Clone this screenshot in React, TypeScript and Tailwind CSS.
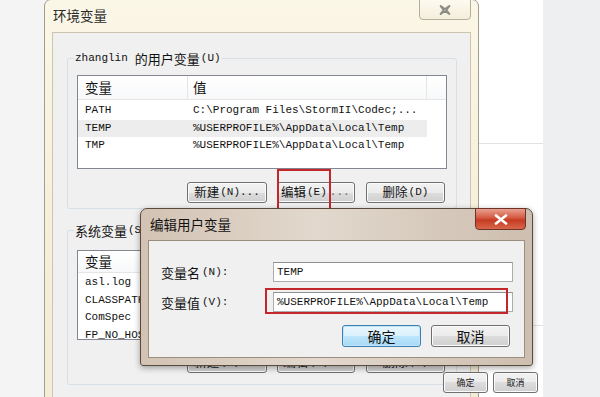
import React from "react";

const MONO = "font-['Liberation_Mono','Noto_Sans_CJK_SC',monospace] text-[11px] leading-none text-[#111]";

function C({ children, className = "" }: { children: React.ReactNode; className?: string }) {
  return <span className={`font-['Noto_Sans_CJK_SC',sans-serif] ${className}`}>{children}</span>;
}

function WinButton({ children, className = "" }: { children: React.ReactNode; className?: string }) {
  return (
    <div
      className={`flex items-center justify-center h-[21px] border border-[#707070] rounded-[3px] bg-[linear-gradient(to_bottom,#f2f2f2_0%,#ebebeb_50%,#dddddd_50%,#cfcfcf_100%)] shadow-[inset_0_0_0_1px_#fbfbfb] ${className}`}
    >
      {children}
    </div>
  );
}

function ListHeader({ h, showValue = true }: { h: string; showValue?: boolean }) {
  return (
    <div className={`flex ${h} border-b border-[#e5e5e5] bg-[linear-gradient(to_bottom,#ffffff,#f7f8f9)]`}>
      <div className="w-[110px] flex items-center pl-[7px] border-r border-[#e5e5e5]">
        <C className="text-[13.5px] leading-none text-[#111]">变量</C>
      </div>
      <div className="w-[239px] flex items-center pl-[5px] border-r border-[#e5e5e5]">
        {showValue && <C className="text-[13.5px] leading-none text-[#111]">值</C>}
      </div>
      <div className="flex-1" />
    </div>
  );
}

function Row({ name, value, selected = false }: { name: string; value?: string; selected?: boolean }) {
  return (
    <div className="flex h-[17.5px]">
      <div className={`flex w-[349px] items-center ${selected ? "bg-[#ededed]" : ""}`}>
        <div className={`w-[110px] pl-[7px] ${MONO}`}>{name}</div>
        {value && <div className={`pl-[5px] whitespace-nowrap ${MONO}`}>{value}</div>}
      </div>
    </div>
  );
}

export default function App() {
  return (
    <div className="relative w-[600px] h-[397px] overflow-hidden bg-[#f4f4f4]">
      {/* window behind on the right */}
      <div className="absolute left-[470px] top-0 w-[74px] h-[397px] bg-white">
        <div className="mt-[143px] h-px bg-[#e2e2e2]" />
        <div className="mt-[181px] ml-[43px] h-px bg-[#e2e2e2]" />
      </div>
      <div className="absolute left-[543px] top-0 w-[57px] h-[397px] bg-[#eeeff1]" />

      {/* main window: 环境变量 */}
      <div className="absolute left-[44px] -top-[1px] w-[435px] h-[420px] flex flex-col border border-[#a19d8f] rounded-t-[7px] bg-[linear-gradient(to_bottom,#fbf7e7,#f5eed8_60%,#f3ecd6)]">
        <div className="relative h-[32px] flex items-center pl-[8px]">
          <C className="text-[13.5px] leading-none text-[#2a2a2a]">环境变量</C>
          <div className="absolute left-[374px] -top-[1px] w-[52px] h-[21px] rounded-b-[4px] border border-[#b5ae9b] bg-[linear-gradient(to_bottom,#fdfaf0,#f4eedb)] flex items-center justify-center">
            <svg width="16" height="12" viewBox="0 0 16 12">
              <path
                d="M3 1.5 L8 5 L13 1.5 M3 10.5 L8 7 L13 10.5 M3 1.5 L6.5 6 L3 10.5 M13 1.5 L9.5 6 L13 10.5"
                fill="none"
                stroke="#8c8a84"
                strokeWidth="1.6"
                strokeLinejoin="round"
              />
            </svg>
          </div>
        </div>
        <div className="mx-[7px] flex-1 border border-[#cbc4ae] bg-[#f0f0f0] flex flex-col">
          {/* user variables */}
          <div className="relative ml-[14px] mt-[25px] w-[390px] h-[151px] border border-[#d5dfe5] rounded-[3px] pt-[16px] pl-[9px] flex flex-col">
            <div className="absolute left-[6px] -top-[9px] px-[1px] bg-[#f0f0f0] flex items-center h-[16px] whitespace-nowrap">
              <span className={MONO}>zhanglin</span>
              <C className="ml-[7px] text-[13px] leading-none text-[#111]">的用户变量</C>
              <span className={`${MONO} ml-[1px]`}>(U)</span>
            </div>
            <div className="w-[370px] h-[94px] border border-[#828790] bg-white overflow-hidden">
              <ListHeader h="h-[24px]" />
              <div className="pt-[2px]">
                <Row name="PATH" value="C:\Program Files\StormII\Codec;..." />
                <Row name="TEMP" value="%USERPROFILE%\AppData\Local\Temp" selected />
                <Row name="TMP" value="%USERPROFILE%\AppData\Local\Temp" />
              </div>
            </div>
            <div className="mt-[13px] flex pl-[110px]">
              <WinButton className="w-[80px]">
                <C className="text-[12.5px] leading-none text-[#111]">新建</C>
                <span className={`${MONO} ml-[1px]`}>(N)...</span>
              </WinButton>
              <WinButton className="w-[78px] ml-[10px] justify-start pl-[3px]">
                <C className="text-[12.5px] leading-none text-[#111]">编辑</C>
                <span className={`${MONO} ml-[1px]`}>(E)</span>
                <span className={`${MONO} ml-[3px] text-[#666]`}>...</span>
              </WinButton>
              <WinButton className="w-[79px] ml-[11px]">
                <C className="text-[12.5px] leading-none text-[#111]">删除</C>
                <span className={`${MONO} ml-[1px]`}>(D)</span>
              </WinButton>
            </div>
            <div className="absolute left-[209px] top-[110px] w-[54px] h-[41px] border-2 border-[#c4262c]" />
          </div>

          {/* system variables */}
          <div className="relative ml-[14px] mt-[21px] w-[390px] h-[155px] border border-[#d5dfe5] rounded-[3px] pt-[19px] pl-[9px] flex flex-col">
            <div className="absolute left-[6px] -top-[9px] px-[1px] bg-[#f0f0f0] flex items-center h-[16px] whitespace-nowrap">
              <C className="text-[13px] leading-none text-[#111]">系统变量</C>
              <span className={`${MONO} ml-[1px]`}>(S)</span>
            </div>
            <div className="w-[370px] h-[90px] border border-[#828790] bg-white overflow-hidden">
              <ListHeader h="h-[22px]" showValue={false} />
              <div className="pt-[1px]">
                <Row name="asl.log" />
                <Row name="CLASSPATH" />
                <Row name="ComSpec" />
                <Row name="FP_NO_HOST_CHECK" />
              </div>
            </div>
            <div className="mt-[12px] flex pl-[110px]">
              <WinButton className="w-[80px]">
                <C className="text-[12.5px] leading-none text-[#111]">新建</C>
                <span className={`${MONO} ml-[1px]`}>(W)...</span>
              </WinButton>
              <WinButton className="w-[78px] ml-[10px]">
                <C className="text-[12.5px] leading-none text-[#111]">编辑</C>
                <span className={`${MONO} ml-[1px]`}>(I)...</span>
              </WinButton>
              <WinButton className="w-[79px] ml-[11px]">
                <C className="text-[12.5px] leading-none text-[#111]">删除</C>
                <span className={`${MONO} ml-[1px]`}>(L)</span>
              </WinButton>
            </div>
          </div>
        </div>
      </div>

      {/* small buttons bottom right */}
      <div className="absolute left-[443px] top-[372px] flex gap-[5px]">
        <WinButton className="w-[45px] h-[15px] rounded-[2px]">
          <C className="text-[9px] leading-none text-[#222]">确定</C>
        </WinButton>
        <WinButton className="w-[45px] h-[15px] rounded-[2px]">
          <C className="text-[9px] leading-none text-[#222]">取消</C>
        </WinButton>
      </div>

      {/* dialog: 编辑用户变量 */}
      <div className="absolute left-[140px] top-[208px] w-[393px] h-[158px] flex flex-col border border-[#5a4a3b] rounded-t-[7px] rounded-b-[3px] bg-[linear-gradient(to_right,#d2c3b4,#e2d8cd_45%,#cdbeaf)] shadow-[0_2px_6px_rgba(0,0,0,0.35)]">
        <div className="relative h-[31px] flex items-center pl-[9px]">
          <C className="text-[13.5px] leading-none text-[#111]">编辑用户变量</C>
          <div className="absolute left-[334px] -top-[1px] w-[51px] h-[22px] rounded-b-[4px] border border-[#6e3226] bg-[linear-gradient(to_bottom,#e8a08f,#d4583f_45%,#c53b22_55%,#d8664a)] flex items-center justify-center">
            <svg width="14" height="11" viewBox="0 0 14 11">
              <path d="M2 1.5 L12 9.5 M12 1.5 L2 9.5" stroke="#ffffff" strokeWidth="2.6" strokeLinecap="round" />
            </svg>
          </div>
        </div>
        <div className="mx-[7px] h-[118px] border border-[#9c8e7f] bg-[#f0f0f0] flex flex-col pt-[21px]">
          <div className="flex items-center h-[20px]">
            <div className="w-[124px] pl-[12px] flex items-center">
              <C className="text-[13px] leading-none text-[#111]">变量名</C>
              <span className={`${MONO} ml-[2px]`}>(N):</span>
            </div>
            <div className="w-[240px] h-[20px] border border-[#abadb3] border-t-[#8e8f8f] bg-white flex items-center pl-[3px]">
              <span className={MONO}>TEMP</span>
            </div>
          </div>
          <div className="flex items-center h-[20px] mt-[10px]">
            <div className="w-[124px] pl-[12px] flex items-center">
              <C className="text-[13px] leading-none text-[#111]">变量值</C>
              <span className={`${MONO} ml-[2px]`}>(V):</span>
            </div>
            <div className="relative w-[240px] h-[20px] border border-[#abadb3] border-t-[#8e8f8f] bg-white flex items-center pl-[3px]">
              <span className={`${MONO} whitespace-nowrap`}>%USERPROFILE%\AppData\Local\Temp</span>
              <div className="absolute -left-[9px] -top-[5px] w-[243px] h-[26px] border-2 border-[#c4262c]" />
            </div>
          </div>
          <div className="flex justify-end pr-[14px] mt-[13px] gap-[10px]">
            <div className="w-[79px] h-[22px] flex items-center justify-center rounded-[3px] border border-[#3c7fb1] bg-[linear-gradient(to_bottom,#eaf6fd,#d9f0fc_50%,#bee6fd_50%,#a7d9f5)] shadow-[inset_0_0_0_1px_#bfe6fb]">
              <C className="text-[14px] leading-none text-[#111]">确定</C>
            </div>
            <WinButton className="w-[79px] h-[22px]">
              <C className="text-[14px] leading-none text-[#111]">取消</C>
            </WinButton>
          </div>
        </div>
      </div>
    </div>
  );
}
